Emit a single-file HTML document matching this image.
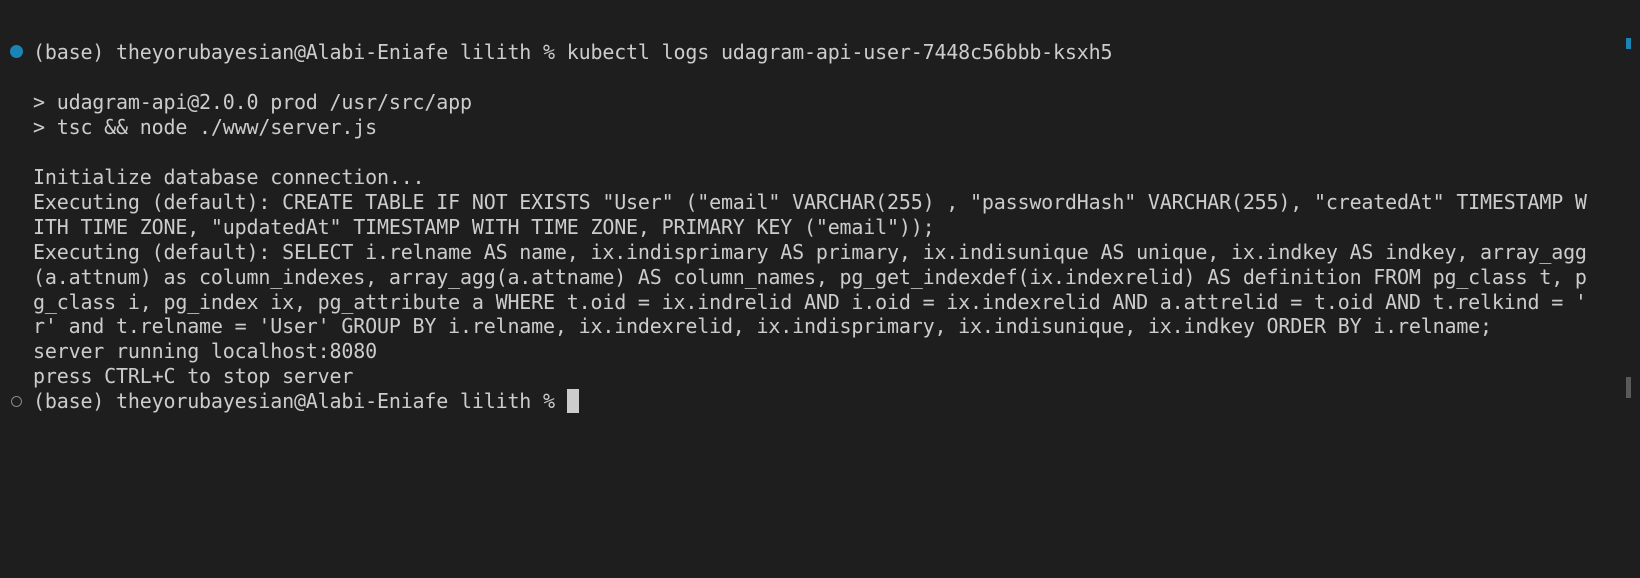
<!DOCTYPE html>
<html><head><meta charset="utf-8"><style>
html,body{margin:0;padding:0;background:#1e1e1e;}
body{width:1640px;height:578px;overflow:hidden;position:relative;}
.t{position:absolute;left:33px;top:40px;font-family:"DejaVu Sans Mono","Liberation Mono",monospace;font-size:20px;line-height:24.95px;letter-spacing:-0.18px;color:#cccccc;white-space:pre;margin:0;}
.dot{position:absolute;left:10px;top:45px;width:13px;height:13px;border-radius:50%;background:#1a85b4;}
.ring{position:absolute;left:11px;top:396px;width:9px;height:9px;border-radius:50%;border:1.5px solid #888;}
.cur{display:inline-block;width:12px;height:24px;background:#cccccc;vertical-align:-5px;}
.sb1{position:absolute;left:1626px;top:38px;width:5px;height:11px;background:#1a85b4;}
.sb2{position:absolute;left:1626px;top:377px;width:5px;height:21px;background:#5a5a5a;}
</style></head><body>
<div class="dot"></div>
<div class="ring"></div>
<div class="sb1"></div>
<div class="sb2"></div>
<pre class="t">(base) theyorubayesian@Alabi-Eniafe lilith % kubectl logs udagram-api-user-7448c56bbb-ksxh5

&gt; udagram-api@2.0.0 prod /usr/src/app
&gt; tsc &amp;&amp; node ./www/server.js

Initialize database connection...
Executing (default): CREATE TABLE IF NOT EXISTS "User" ("email" VARCHAR(255) , "passwordHash" VARCHAR(255), "createdAt" TIMESTAMP W
ITH TIME ZONE, "updatedAt" TIMESTAMP WITH TIME ZONE, PRIMARY KEY ("email"));
Executing (default): SELECT i.relname AS name, ix.indisprimary AS primary, ix.indisunique AS unique, ix.indkey AS indkey, array_agg
(a.attnum) as column_indexes, array_agg(a.attname) AS column_names, pg_get_indexdef(ix.indexrelid) AS definition FROM pg_class t, p
g_class i, pg_index ix, pg_attribute a WHERE t.oid = ix.indrelid AND i.oid = ix.indexrelid AND a.attrelid = t.oid AND t.relkind = '
r' and t.relname = 'User' GROUP BY i.relname, ix.indexrelid, ix.indisprimary, ix.indisunique, ix.indkey ORDER BY i.relname;
server running localhost:8080
press CTRL+C to stop server
(base) theyorubayesian@Alabi-Eniafe lilith % <span class="cur"></span></pre>
</body></html>
